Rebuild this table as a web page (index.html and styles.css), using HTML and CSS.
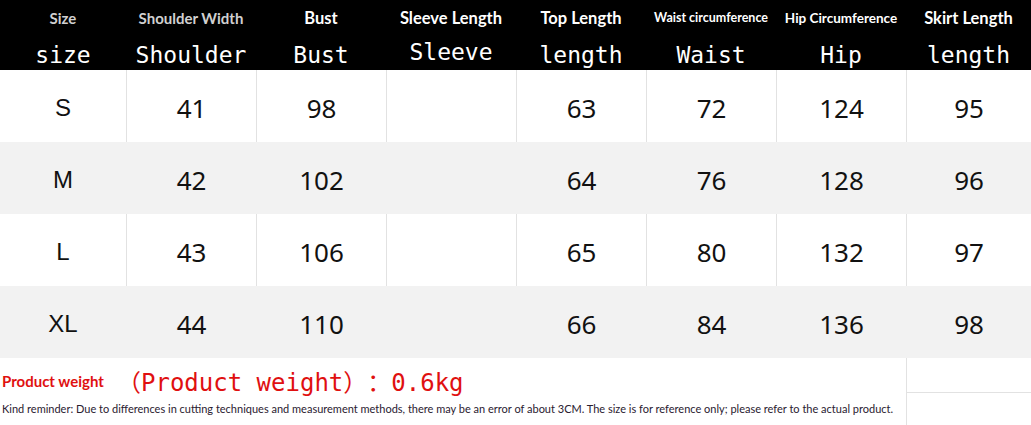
FILE: index.html
```html
<!DOCTYPE html>
<html>
<head>
<meta charset="utf-8">
<link rel="stylesheet" href="styles.css">
</head>
<body>
<div class="chart">
  <div class="row head">
    <div class="cell"><span class="en dim">Size</span><span class="mono">size</span></div>
    <div class="cell"><span class="en dim">Shoulder Width</span><span class="mono">Shoulder</span></div>
    <div class="cell"><span class="en">Bust</span><span class="mono">Bust</span></div>
    <div class="cell"><span class="en">Sleeve Length</span><span class="mono up">Sleeve</span></div>
    <div class="cell"><span class="en">Top Length</span><span class="mono">length</span></div>
    <div class="cell"><span class="en xs">Waist circumference</span><span class="mono">Waist</span></div>
    <div class="cell"><span class="en sm">Hip Circumference</span><span class="mono">Hip</span></div>
    <div class="cell"><span class="en">Skirt Length</span><span class="mono">length</span></div>
  </div>
  <div class="row body">
    <div class="cell sz">S</div><div class="cell">41</div><div class="cell">98</div><div class="cell"></div><div class="cell">63</div><div class="cell">72</div><div class="cell">124</div><div class="cell">95</div>
  </div>
  <div class="row body alt">
    <div class="cell sz">M</div><div class="cell">42</div><div class="cell">102</div><div class="cell"></div><div class="cell">64</div><div class="cell">76</div><div class="cell">128</div><div class="cell">96</div>
  </div>
  <div class="row body">
    <div class="cell sz">L</div><div class="cell">43</div><div class="cell">106</div><div class="cell"></div><div class="cell">65</div><div class="cell">80</div><div class="cell">132</div><div class="cell">97</div>
  </div>
  <div class="row body alt">
    <div class="cell sz">XL</div><div class="cell">44</div><div class="cell">110</div><div class="cell"></div><div class="cell">66</div><div class="cell">84</div><div class="cell">136</div><div class="cell">98</div>
  </div>
  <div class="foot">
    <div class="notes">
      <div class="weight"><span class="wlabel">Product weight</span><span class="wvalue"><span class="fw">（</span>Product weight<span class="fw">）：</span>0.6kg</span></div>
      <div class="reminder">Kind reminder: Due to differences in cutting techniques and measurement methods, there may be an error of about 3CM. The size is for reference only; please refer to the actual product.</div>
    </div>
    <div class="side"><div class="side-top"></div><div class="side-bot"></div></div>
  </div>
</div>
</body>
</html>
```

FILE: styles.css
```css
html, body {
  margin: 0;
  padding: 0;
  background: #fff;
}
.chart {
  width: 1031px;
  height: 425px;
  overflow: hidden;
}
.row {
  display: grid;
  grid-template-columns: 126px repeat(6, 130px) 125px;
}
.head {
  background: #000;
  height: 70px;
}
.head .cell {
  display: flex;
  flex-direction: column;
  align-items: center;
}
.en {
  font-family: Lato, "Liberation Sans", sans-serif;
  font-weight: 700;
  font-size: 16.5px;
  color: #fff;
  height: 20px;
  line-height: 20px;
  margin-top: 8px;
  white-space: nowrap;
}
.en.dim {
  color: #d0d0d0;
  font-size: 15px;
}
.en.xs {
  font-size: 12.5px;
}
.en.sm {
  font-size: 13.5px;
}
.mono {
  font-family: "DejaVu Sans Mono", monospace;
  font-size: 23px;
  color: #fff;
  line-height: 28px;
  margin-top: 13px;
  white-space: nowrap;
}
.mono.up {
  margin-top: 10px;
}
.body {
  height: 72px;
  background: #fff;
}
.body.alt {
  background: #f2f2f2;
}
.body .cell {
  display: flex;
  align-items: center;
  justify-content: center;
  font-family: "Noto Sans", "Liberation Sans", sans-serif;
  font-size: 26px;
  color: #111;
  padding-top: 3px;
}
.body .cell + .cell {
  border-left: 1px solid #e2e2e2;
}
.body.alt .cell + .cell {
  border-left-color: #f2f2f2;
}
.body .cell.sz {
  font-family: "Liberation Sans", Arial, sans-serif;
  font-size: 24px;
}
.foot {
  display: grid;
  grid-template-columns: 906px 125px;
  height: 67px;
}
.notes {
  padding-left: 2px;
}
.weight {
  display: flex;
  align-items: center;
  height: 44px;
}
.wlabel {
  font-family: Lato, "Liberation Sans", sans-serif;
  font-weight: 700;
  font-size: 15px;
  color: #e01010;
  width: 115px;
  padding-top: 1px;
}
.wvalue {
  font-family: "DejaVu Sans Mono", "Noto Sans CJK SC", monospace;
  font-size: 24px;
  color: #e01010;
  white-space: nowrap;
  text-spacing-trim: space-all;
}
.fw {
  font-family: "Noto Sans CJK SC", sans-serif;
  text-spacing-trim: space-all;
}
.reminder {
  font-family: Lato, "Liberation Sans", sans-serif;
  font-size: 11px;
  color: #2a2030;
  white-space: nowrap;
  line-height: 14px;
}
.side {
  border-left: 1px solid #e2e2e2;
  display: flex;
  flex-direction: column;
}
.side-top {
  height: 34px;
  border-bottom: 1px solid #e2e2e2;
}
```
